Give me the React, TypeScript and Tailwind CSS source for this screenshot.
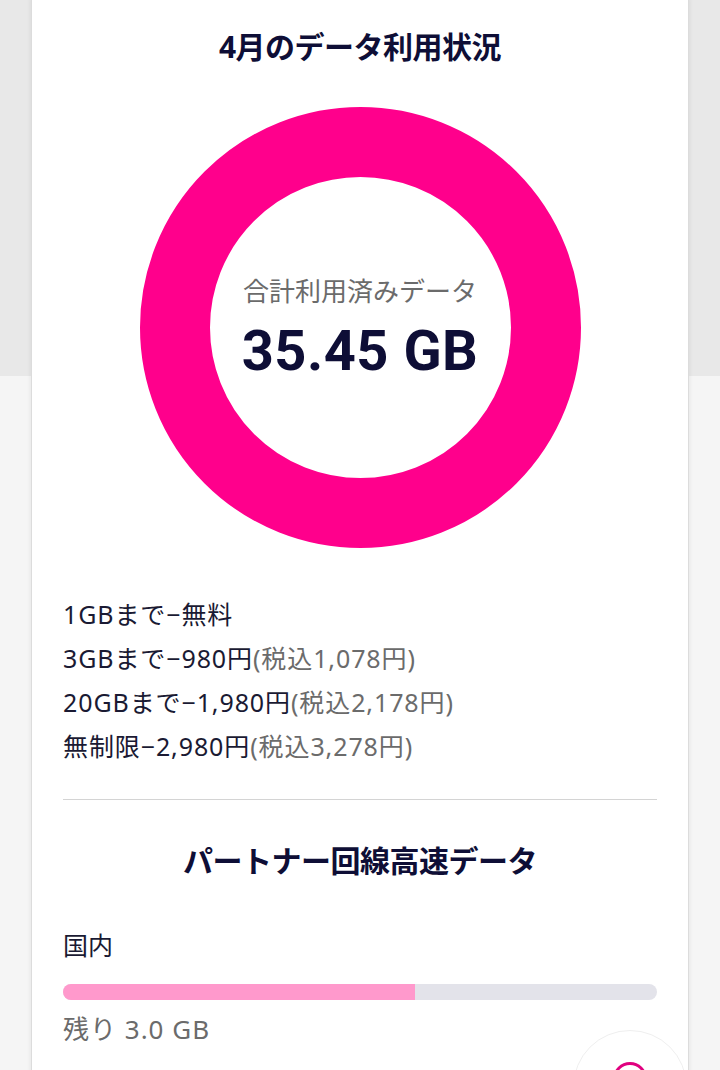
import React from "react";

const font = { fontFamily: '"Noto Sans", "Noto Sans CJK JP", sans-serif' };

export default function App() {
  return (
    <div
      className="relative w-[720px] h-[1070px] overflow-hidden bg-[linear-gradient(to_bottom,#e8e8e8_376px,#f5f5f5_376px)]"
      style={font}
    >
      <div className="mx-[32px] h-[1100px] bg-white shadow-[0_0_0_1px_#dcdcdc,0_0_4px_2px_rgba(0,0,0,0.06)] px-[31px] pt-[27px]">
        <h1 className="text-center text-[30px] leading-[40px] font-bold text-[#0e0e36] tracking-[-0.5px]">
          4月のデータ利用状況
        </h1>
        <div className="mt-[40px] flex justify-center">
          <div className="w-[441px] h-[441px] rounded-full border-[70px] border-[#ff008c] flex flex-col items-center justify-center">
            <div className="text-[26px] leading-[34px] text-[#6b6b6b]">合計利用済みデータ</div>
            <div
              className="mt-[13px] text-[56px] leading-[60px] font-bold text-[#0e0e36] tracking-[0.5px]"
              style={{ fontFamily: 'Roboto, "Noto Sans", sans-serif' }}
            >
              35.45 GB
            </div>
          </div>
        </div>
        <div className="mt-[44px] text-[25px] leading-[44px] text-[#1a1a33] tracking-[0.9px]">
          <div>1GBまで−無料</div>
          <div>
            3GBまで−980円<span className="text-[#6b6b6b]">(税込1,078円)</span>
          </div>
          <div>
            20GBまで−1,980円<span className="text-[#6b6b6b]">(税込2,178円)</span>
          </div>
          <div>
            無制限−2,980円<span className="text-[#6b6b6b]">(税込3,278円)</span>
          </div>
        </div>
        <div className="mt-[31px] h-px bg-[#d4d4d4]" />
        <h2 className="mt-[42px] text-center text-[30px] leading-[38px] font-bold text-[#0e0e36] tracking-[-0.5px]">
          パートナー回線高速データ
        </h2>
        <div className="mt-[49px] text-[25px] leading-[32px] text-[#1a1a33]">国内</div>
        <div className="mt-[23px] h-[16px] rounded-full bg-[#e3e3ea] overflow-hidden">
          <div className="h-full bg-[#ff99cc]" style={{ width: "59.3%" }} />
        </div>
        <div className="mt-[13px] text-[26px] leading-[32px] text-[#6b6b6b] tracking-[1px]">残り 3.0 GB</div>
      </div>
      <div className="absolute left-[573px] top-[1030px] w-[114px] h-[114px] rounded-full bg-white border border-[#efefef] flex justify-center">
        <div className="mt-[31px] w-[34px] h-[34px] rounded-full border-[3px] border-[#e0007f]" />
      </div>
    </div>
  );
}
